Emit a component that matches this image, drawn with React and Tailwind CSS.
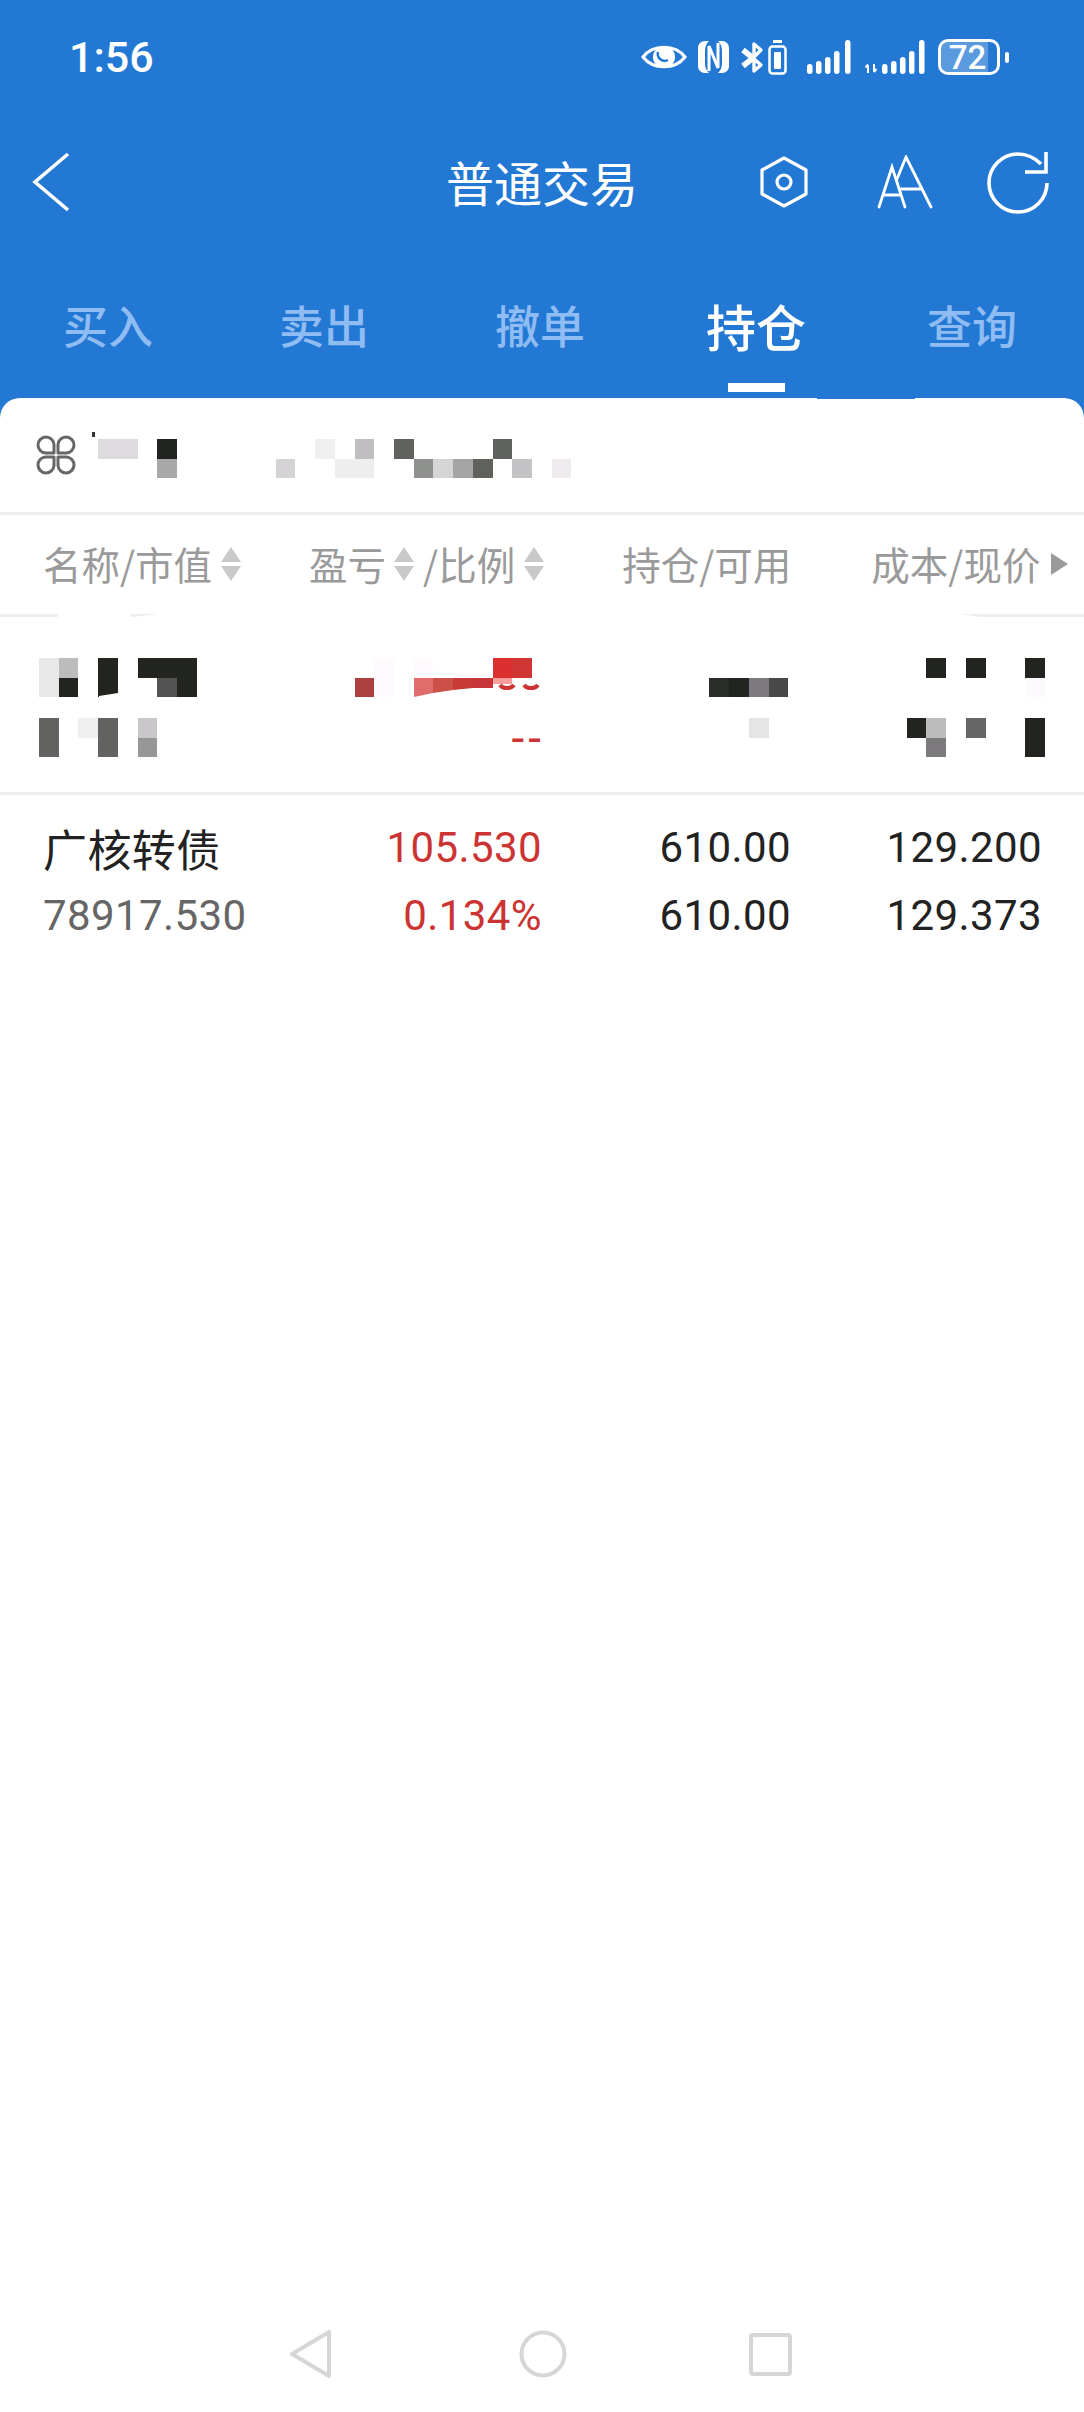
const CELL = 19.72

const col = (i) => 39 + CELL * i

// blurred-out figures in the picture, as [column, y, height, colour]
const accountCells = [
  [3, 41, 19.5, '#dddbdd'], [4, 41, 19.5, '#dddbdd'],
  [6, 41, 19.5, '#22241f'], [6, 60.5, 19.5, '#a9a8a9'],
  [12, 60.5, 19.5, '#d5d3d6'], [14, 41, 19.5, '#efefef'],
  [15, 60.5, 19.5, '#eeeeee'], [16, 60.5, 19.5, '#eeeeee'],
  [16, 41, 19.5, '#c0bec1'], [18, 41, 19.5, '#60625e'],
  [19, 60.5, 19.5, '#8f918e'], [20, 60.5, 19.5, '#d5d5d5'],
  [21, 60.5, 19.5, '#a5a5a5'], [22, 60.5, 19.5, '#5f615d'],
  [23, 41, 19.5, '#60625e'], [24, 60.5, 19.5, '#c3c2c4'],
  [26, 60.5, 19.5, '#efebef'],
]

const holdingCells = [
  [0, 41, 39, '#e8e8e8'], [1, 41, 20, '#bcbcbc'], [1, 61, 19, '#22241f'],
  [3, 41, 39, '#22241f'], [5, 41, 20, '#22241f'], [6, 41, 20, '#22241f'],
  [7, 41, 20, '#22241f'], [6, 61, 19, '#525252'], [7, 61, 19, '#22241f'],
  [0, 101, 39, '#626361'], [2, 101, 19.5, '#efefef'], [3, 101, 39, '#626361'],
  [5, 101, 19.5, '#c9c7ca'], [5, 120.5, 19.5, '#979797'],
  [16, 61, 19, '#ac4040'], [17, 41, 39, '#fefafe'], [19, 41, 20, '#fefafe'],
  [23, 41, 20, '#dc3030'], [24, 41, 20, '#d03633'], [23, 61, 6, '#ff9c9c'],
  [34, 61, 19, '#2b2d2b'], [35, 61, 19, '#22241f'], [36, 61, 19, '#7c7a7d'],
  [37, 61, 19, '#484848'], [36, 101, 19.5, '#e5e5e5'],
  [45, 41, 20, '#22241f'], [47, 41, 20, '#22241f'], [50, 41, 20, '#22241f'],
  [50, 61, 19, '#fdfafd'], [44, 101, 19.5, '#22241f'], [45, 101, 19.5, '#bcbcbc'],
  [45, 120.5, 19.5, '#7c7a7d'], [47, 101, 19.5, '#666666'], [50, 101, 39, '#22241f'],
]

const Cells = ({ cells }) =>
  cells.map(([c, y, h, fill], i) => (
    <rect key={i} x={col(c)} y={y} width={CELL} height={h} fill={fill} shapeRendering="crispEdges" />
  ))

function EyeIcon() {
  return (
    <svg width="46" height="30" viewBox="0 0 46 30" className="block">
      <path d="M2 15C12 2 34 2 44 15C34 28 12 28 2 15Z" fill="none" stroke="white" strokeWidth="3" />
      <circle cx="23" cy="15" r="11" fill="white" />
      <path d="M17 10a7 7 0 0 0 10 8" fill="none" stroke="#2378d4" strokeWidth="2.5" />
    </svg>
  )
}

function NfcIcon() {
  return (
    <svg width="31" height="32" viewBox="0 0 31 32" className="block">
      <path d="M7 0C3 0 0 3 0 7V25C0 29 3 32 7 32H11C8 29 7 26 7 22V10C7 6 8 3 11 0Z" fill="white" />
      <path d="M24 0C28 0 31 3 31 7V25C31 29 28 32 24 32H20C23 29 24 26 24 22V10C24 6 23 3 20 0Z" fill="white" />
      <path d="M11 30V5L20 27V2" fill="none" stroke="white" strokeWidth="3" />
    </svg>
  )
}

function BluetoothIcon() {
  return (
    <svg width="23" height="33" viewBox="0 0 23 33" className="block">
      <path d="M2 9L12 17M2 25L12 17" fill="none" stroke="white" strokeWidth="5.5" />
      <path d="M12 17L20 24L13 30V3L20 9L12 17" fill="none" stroke="white" strokeWidth="3.4" strokeLinejoin="round" />
    </svg>
  )
}

function SmallBattery() {
  return (
    <svg width="19" height="35" viewBox="0 0 19 35" className="block">
      <rect x="5" y="0" width="9" height="3" fill="white" />
      <rect x="1.5" y="6.5" width="16" height="27" rx="3" fill="none" stroke="white" strokeWidth="2.5" />
      <rect x="6" y="12" width="7" height="17" rx="1" fill="white" />
    </svg>
  )
}

function SignalOne() {
  return (
    <svg width="44" height="34" viewBox="0 0 44 34" className="block">
      <rect x="0" y="24" width="5.5" height="10" rx="2.7" fill="white" />
      <rect x="9" y="21" width="5.5" height="13" rx="2.7" fill="white" />
      <rect x="18" y="17" width="5.5" height="17" rx="2.7" fill="white" />
      <rect x="27" y="11" width="5.5" height="23" rx="2.7" fill="white" />
      <rect x="38" y="0" width="5.5" height="34" rx="2.7" fill="white" />
    </svg>
  )
}

function SignalTwo() {
  return (
    <svg width="60" height="34" viewBox="0 0 60 34" className="block">
      <path d="M3 33V25M0.5 27.5L3 24.5M9 24V32M9 32L11.5 29" fill="none" stroke="white" strokeWidth="2" />
      <rect x="17" y="24" width="5.5" height="10" rx="2.7" fill="white" />
      <rect x="26" y="21" width="5.5" height="13" rx="2.7" fill="white" />
      <rect x="35" y="17" width="5.5" height="17" rx="2.7" fill="white" />
      <rect x="44" y="11" width="5.5" height="23" rx="2.7" fill="white" />
      <rect x="54" y="0" width="5.5" height="34" rx="2.7" fill="white" />
    </svg>
  )
}

function Battery() {
  return (
    <div className="flex items-center">
      <div className="w-[62px] h-[36px] rounded-[10px] border-[3px] border-white overflow-hidden flex">
        <div className="w-[47px] h-full bg-white/25 flex items-center justify-center text-white text-[33px] leading-none font-medium pl-[6px]">
          72
        </div>
      </div>
      <div className="w-[4px] h-[11px] ml-[5px] rounded-full bg-white" />
    </div>
  )
}

function SortArrows({ className }) {
  return (
    <svg width="20" height="34" viewBox="0 0 20 34" className={className}>
      <path d="M10 0L20 15H0Z" fill="#c9c9c9" />
      <path d="M10 34L20 19H0Z" fill="#c9c9c9" />
    </svg>
  )
}

function Clover() {
  return (
    <svg width="42" height="42" viewBox="0 0 42 42" fill="none" stroke="#666666" strokeWidth="3" className="block">
      <path d="M19 19H10.5a8 8 0 1 1 8.5-8.5Z" strokeLinejoin="round" />
      <path d="M23 19H31.5a8 8 0 1 0-8.5-8.5Z" strokeLinejoin="round" />
      <path d="M19 23H10.5a8 8 0 1 0 8.5 8.5Z" strokeLinejoin="round" />
      <path d="M23 23H31.5a8 8 0 1 1-8.5 8.5Z" strokeLinejoin="round" />
    </svg>
  )
}

const tabs = ['买入', '卖出', '撤单', '持仓', '查询']

function DataRow({ first, second, third, fourth, firstClass }) {
  return (
    <div className="flex items-center h-[68px] text-[42px] leading-none font-[450] text-[#222222] tracking-[0.4px]">
      <div className={`w-[300px] pl-[43px] ${firstClass}`}>{first}</div>
      <div className="w-[242px] text-right text-[#cc3333]">{second}</div>
      <div className="w-[249px] text-right">{third}</div>
      <div className="w-[251px] text-right">{fourth}</div>
    </div>
  )
}

export default function App() {
  return (
    <div className="h-[2412px] w-full flex flex-col bg-[#2378d4] font-[Roboto,'Noto_Sans_CJK_SC',sans-serif] overflow-hidden">
      {/* status bar */}
      <div className="h-[114px] shrink-0 flex items-center justify-between text-white">
        <span className="ml-[69px] text-[43px] leading-none font-medium">1:56</span>
        <div className="flex items-center mr-[75px]">
          <EyeIcon />
          <div className="ml-[11px]"><NfcIcon /></div>
          <div className="ml-[12px]"><BluetoothIcon /></div>
          <div className="ml-[4px]"><SmallBattery /></div>
          <div className="ml-[20px]"><SignalOne /></div>
          <div className="ml-[14px]"><SignalTwo /></div>
          <div className="ml-[13px]"><Battery /></div>
        </div>
      </div>

      {/* title bar */}
      <div className="h-[136px] shrink-0 flex items-center">
        <svg width="38" height="60" viewBox="0 0 38 60" className="ml-[32px] block">
          <path d="M36 2L3 30L36 58" fill="none" stroke="white" strokeWidth="3.6" />
        </svg>
        <span className="ml-[376px] pb-[3px] text-[48px] leading-none text-white font-['Noto_Sans_CJK_SC',sans-serif] whitespace-nowrap">普通交易</span>
        <svg width="48" height="52" viewBox="0 0 48 52" className="ml-[122px] block">
          <path d="M24 2L46 14V38L24 50L2 38V14Z" fill="none" stroke="white" strokeWidth="3.2" strokeLinejoin="round" />
          <circle cx="24" cy="26" r="7" fill="none" stroke="white" strokeWidth="3.2" />
        </svg>
        <svg width="56" height="54" viewBox="0 0 56 54" className="ml-[69px] block">
          <g fill="none" stroke="white" strokeWidth="2.8" strokeLinecap="round">
            <path d="M2 52L15 12L28 52M6 40H24" />
            <path d="M20 24L29 2L54 52M24 34H45" />
          </g>
        </svg>
        <svg width="64" height="64" viewBox="0 0 64 64" className="ml-[53px] block">
          <g fill="none" stroke="white" strokeWidth="3.6">
            <path d="M61 33A29 29 0 1 1 32 4C41 4 49 8 55 14" />
            <path d="M60 2V22H39" />
          </g>
        </svg>
      </div>

      {/* tabs */}
      <div className="h-[148px] shrink-0 flex font-['Noto_Sans_CJK_SC',sans-serif]">
        {tabs.map((t) => (
          <div key={t} className="w-[216px] flex flex-col items-center pt-[49px]">
            <span className={t === '持仓' ? 'text-[50px] leading-[52px] font-medium text-white' : 'text-[45px] leading-[52px] font-medium text-[#8fbcf2]'}>
              {t}
            </span>
            {t === '持仓' && <div className="w-[57px] h-[9px] mt-[32px] bg-white" />}
          </div>
        ))}
      </div>

      {/* card */}
      <div className="relative flex-1 flex flex-col bg-white rounded-t-[20px]">
        <div className="absolute top-0 left-[817px] w-[98px] h-[1px] bg-[#2378d4]" />

        <div className="h-[114px] flex items-center">
          <div className="ml-[35px]"><Clover /></div>
          <svg width="1007" height="114" viewBox="77 0 1007 114" className="block">
            <rect x="92" y="34" width="3" height="5" fill="#33352f" />
            <Cells cells={accountCells} />
          </svg>
        </div>
        <div className="h-[3px] bg-[#eeeeee]" />

        <div className="h-[99px] pb-[2px] flex items-center text-[38.5px] leading-none text-[#9a9a9a] whitespace-nowrap font-['Noto_Sans_CJK_SC',sans-serif]">
          <span className="ml-[43px]">名称/市值</span>
          <SortArrows className="ml-[9px] block shrink-0" />
          <span className="ml-[68px]">盈亏</span>
          <SortArrows className="ml-[8px] block shrink-0" />
          <span className="ml-[9px]">/比例</span>
          <SortArrows className="ml-[9px] block shrink-0" />
          <span className="ml-[78px]">持仓/可用</span>
          <span className="ml-[80px]">成本/现价</span>
          <svg width="17" height="22" viewBox="0 0 17 22" className="ml-[11px] block shrink-0">
            <path d="M0 0L17 11L0 22Z" fill="#9a9a9a" />
          </svg>
        </div>

        {/* the line under the header is partly wiped out in the picture */}
        <svg width="1084" height="3" viewBox="0 0 1084 3" className="block">
          <rect x="0" y="0" width="58" height="3" fill="#eeeeee" />
          <path d="M130 0H160L132 3Z" fill="#eeeeee" />
          <path d="M961 0H1084V3H980Z" fill="#eeeeee" />
        </svg>

        <svg width="1084" height="175" viewBox="0 0 1084 175" className="block">
          <Cells cells={holdingCells} />
          <path d="M414 61H433V76L414 80Z" fill="#e06c6c" />
          <path d="M433 61H453V73L433 76Z" fill="#cc5048" />
          <path d="M453 61H473V71L453 73Z" fill="#c93a36" />
          <path d="M473 61H493V71H473Z" fill="#c8363a" />
          <path d="M500 68A8 6 0 0 0 514 68" fill="none" stroke="#cc3333" strokeWidth="4" />
          <path d="M524 68A8 6 0 0 0 538 68" fill="none" stroke="#cc3333" strokeWidth="4" />
          <path d="M99 79L118 76V80H99Z" fill="white" />
          <text x="545" y="137" textAnchor="end" fontSize="46" letterSpacing="4" fill="#cc3333">--</text>
        </svg>
        <div className="h-[3px] bg-[#eeeeee]" />

        <div className="pt-[19px]">
          <DataRow
            first="广核转债"
            firstClass="text-[44px] font-['Noto_Sans_CJK_SC',sans-serif] font-normal"
            second="105.530"
            third="610.00"
            fourth="129.200"
          />
          <DataRow
            first="78917.530"
            firstClass="text-[#666666]"
            second="0.134%"
            third="610.00"
            fourth="129.373"
          />
        </div>

        {/* android nav */}
        <div className="mt-auto h-[118px] pt-[2px] flex items-center">
          <svg width="44" height="50" viewBox="0 0 44 50" className="ml-[289px] block">
            <path d="M40 3L3 25L40 47Z" fill="none" stroke="#d6d6d6" strokeWidth="4" strokeLinejoin="round" />
          </svg>
          <svg width="48" height="48" viewBox="0 0 48 48" className="ml-[186px] block">
            <circle cx="24" cy="24" r="21.5" fill="none" stroke="#d6d6d6" strokeWidth="4" />
          </svg>
          <svg width="43" height="43" viewBox="0 0 43 43" className="ml-[182px] block">
            <rect x="2" y="2" width="39" height="39" rx="2" fill="none" stroke="#d6d6d6" strokeWidth="4" />
          </svg>
        </div>
      </div>
    </div>
  )
}
